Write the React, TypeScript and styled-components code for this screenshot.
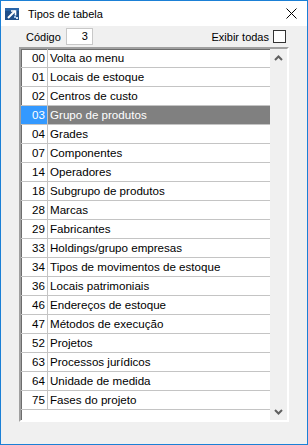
import React from "react";
import styled, { createGlobalStyle } from "styled-components";

const Global = createGlobalStyle`
  html, body { margin: 0; padding: 0; background: #ffffff; }
  * { box-sizing: border-box; }
`;

const FONT = `"Liberation Sans", Arial, sans-serif`;

const Window = styled.div`
  width: 308px;
  height: 445px;
  border: 1px solid #1b80d6;
  display: flex;
  flex-direction: column;
  font-family: ${FONT};
  color: #000;
  background: #f0f0f0;
`;

const TitleBar = styled.div`
  height: 25px;
  background: #ffffff;
  display: flex;
  align-items: center;
  padding-left: 4px;
  padding-right: 10px;
`;

const TitleText = styled.div`
  flex: 1;
  margin-left: 7px;
  font-size: 11px;
  color: #000;
`;

const Body = styled.div`
  flex: 1;
  display: flex;
  flex-direction: column;
  padding: 0 18px 22px 18px;
`;

const Toolbar = styled.div`
  height: 21px;
  display: flex;
  align-items: center;
  padding-left: 7px;
  padding-right: 3px;
  font-size: 11px;
`;

const Label = styled.span`
  margin-right: 5px;
`;

const CodeInput = styled.div`
  width: 27px;
  height: 17px;
  background: #fff;
  border: 1px solid #c8c8c8;
  text-align: right;
  padding-right: 4px;
  line-height: 15px;
  font-size: 11px;
`;

const Spacer = styled.div`
  flex: 1;
`;

const CheckBox = styled.div`
  width: 13px;
  height: 13px;
  border: 1px solid #333;
  background: #fff;
  margin-left: 4px;
`;

const ListBox = styled.div`
  flex: 1;
  display: flex;
  border-style: solid;
  border-width: 2px;
  border-color: #a0a0a0 #ffffff #ffffff #a0a0a0;
  box-shadow: inset 1px 1px 0 #6d6d6d;
  background: #fff;
  overflow: hidden;
`;

const Rows = styled.div`
  flex: 1;
  display: flex;
  flex-direction: column;
  font-size: 11.6px;
`;

const Row = styled.div<{ $selected?: boolean }>`
  height: 19px;
  display: flex;
  border-bottom: 1px solid #c4c4c4;
  color: ${(p) => (p.$selected ? "#fff" : "#000")};
`;

const NumCell = styled.div<{ $selected?: boolean }>`
  width: 27px;
  border-right: 1px solid #c4c4c4;
  text-align: right;
  padding-right: 2px;
  line-height: 18px;
  background: ${(p) => (p.$selected ? "#3399ff" : "transparent")};
`;

const TextCell = styled.div<{ $selected?: boolean }>`
  flex: 1;
  padding-left: 2px;
  line-height: 18px;
  white-space: nowrap;
  background: ${(p) => (p.$selected ? "#808080" : "transparent")};
`;

const ScrollBar = styled.div`
  width: 17px;
  background: #f0f0f0;
  display: flex;
  flex-direction: column;
  justify-content: space-between;
  align-items: center;
  padding: 6px 0 5px 0;
`;

const rows: [string, string][] = [
  ["00", "Volta ao menu"],
  ["01", "Locais de estoque"],
  ["02", "Centros de custo"],
  ["03", "Grupo de produtos"],
  ["04", "Grades"],
  ["07", "Componentes"],
  ["14", "Operadores"],
  ["18", "Subgrupo de produtos"],
  ["28", "Marcas"],
  ["29", "Fabricantes"],
  ["33", "Holdings/grupo empresas"],
  ["34", "Tipos de movimentos de estoque"],
  ["36", "Locais patrimoniais"],
  ["46", "Endereços de estoque"],
  ["47", "Métodos de execução"],
  ["52", "Projetos"],
  ["63", "Processos jurídicos"],
  ["64", "Unidade de medida"],
  ["75", "Fases do projeto"],
];

const AppIcon = () => (
  <svg width="16" height="14" viewBox="0 0 16 14">
    <rect x="0" y="1" width="14" height="12" fill="#1f4f8a" />
    <rect x="0" y="1" width="14" height="3" fill="#2a65a8" />
    <path d="M3 11 L10 4" stroke="#fff" strokeWidth="2" />
    <path d="M6 4 H10.5 V8.5" stroke="#fff" strokeWidth="1.6" fill="none" />
    <rect x="9" y="9" width="2" height="2" fill="#9fc3ea" />
    <rect x="11" y="10" width="2" height="2" fill="#cfe1f5" />
  </svg>
);

const CloseIcon = () => (
  <svg width="11" height="11" viewBox="0 0 11 11">
    <path d="M0.5 0.5 L10.5 10.5 M10.5 0.5 L0.5 10.5" stroke="#000" strokeWidth="1" />
  </svg>
);

const Chevron = ({ up }: { up?: boolean }) => (
  <svg width="9" height="6" viewBox="0 0 9 6">
    <path
      d={up ? "M1 5 L4.5 1.5 L8 5" : "M1 1 L4.5 4.5 L8 1"}
      stroke="#606060"
      strokeWidth="2"
      fill="none"
    />
  </svg>
);

export default function App() {
  return (
    <>
      <Global />
      <Window>
        <TitleBar>
          <AppIcon />
          <TitleText>Tipos de tabela</TitleText>
          <CloseIcon />
        </TitleBar>
        <Body>
          <Toolbar>
            <Label>Código</Label>
            <CodeInput>3</CodeInput>
            <Spacer />
            <span>Exibir todas</span>
            <CheckBox />
          </Toolbar>
          <ListBox>
            <Rows>
              {rows.map(([n, t]) => {
                const sel = n === "03";
                return (
                  <Row key={n} $selected={sel}>
                    <NumCell $selected={sel}>{n}</NumCell>
                    <TextCell $selected={sel}>{t}</TextCell>
                  </Row>
                );
              })}
            </Rows>
            <ScrollBar>
              <Chevron up />
              <Chevron />
            </ScrollBar>
          </ListBox>
        </Body>
      </Window>
    </>
  );
}
